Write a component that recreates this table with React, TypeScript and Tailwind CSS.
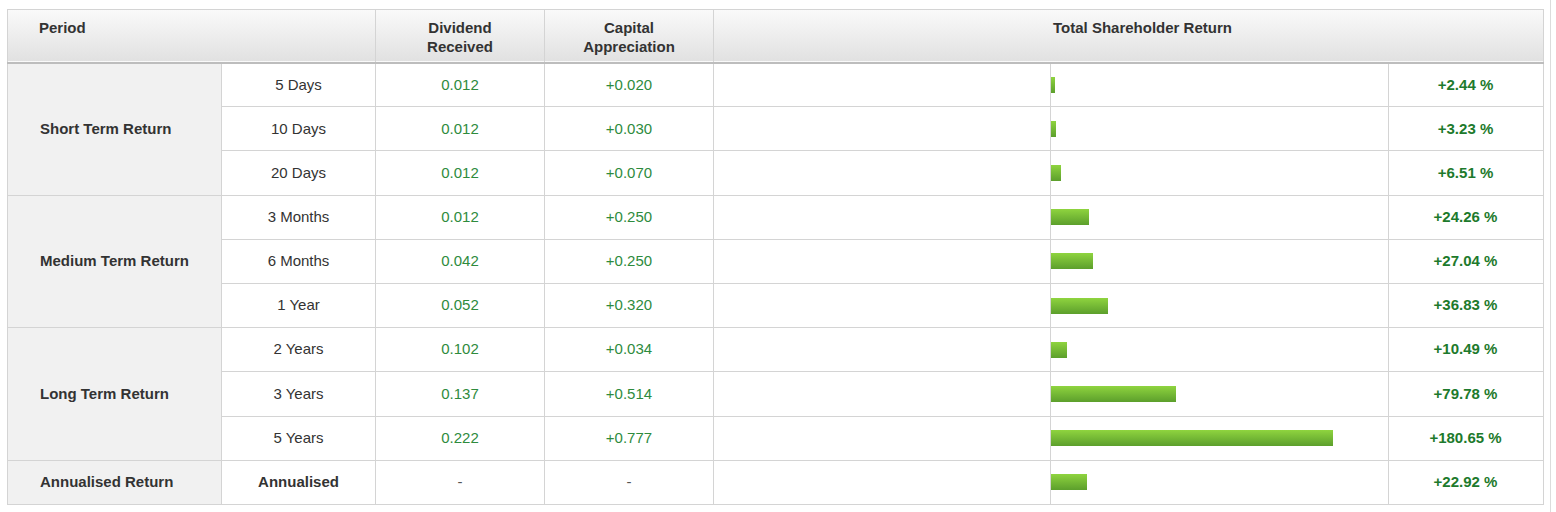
import React from "react";

type Row = {
  label: string;
  dividend: string;
  capital: string;
  tsr: number;
  bold?: boolean;
};

const groups: { name: string; rows: Row[] }[] = [
  {
    name: "Short Term Return",
    rows: [
      { label: "5 Days", dividend: "0.012", capital: "+0.020", tsr: 2.44 },
      { label: "10 Days", dividend: "0.012", capital: "+0.030", tsr: 3.23 },
      { label: "20 Days", dividend: "0.012", capital: "+0.070", tsr: 6.51 },
    ],
  },
  {
    name: "Medium Term Return",
    rows: [
      { label: "3 Months", dividend: "0.012", capital: "+0.250", tsr: 24.26 },
      { label: "6 Months", dividend: "0.042", capital: "+0.250", tsr: 27.04 },
      { label: "1 Year", dividend: "0.052", capital: "+0.320", tsr: 36.83 },
    ],
  },
  {
    name: "Long Term Return",
    rows: [
      { label: "2 Years", dividend: "0.102", capital: "+0.034", tsr: 10.49 },
      { label: "3 Years", dividend: "0.137", capital: "+0.514", tsr: 79.78 },
      { label: "5 Years", dividend: "0.222", capital: "+0.777", tsr: 180.65 },
    ],
  },
  {
    name: "Annualised Return",
    rows: [
      { label: "Annualised", dividend: "-", capital: "-", tsr: 22.92, bold: true },
    ],
  },
];

const cell = "border border-[#d4d4d4] text-center align-middle";

function Bar({ value }: { value: number }) {
  return (
    <div className="flex h-full">
      <div className="w-1/2 h-full border-r border-[#d4d4d4]" />
      <div className="w-1/2 h-full flex items-center">
        <div
          className="h-[16px] bg-gradient-to-b from-[#8fd43f] to-[#5c9f2c]"
          style={{ width: Math.round(value * 1.561) }}
        />
      </div>
    </div>
  );
}

function valueColor(v: string) {
  return v === "-" ? "text-[#555]" : "text-[#2e8b3d]";
}

export default function App() {
  return (
    <div className="relative w-[1556px] h-[512px] bg-white font-['Liberation_Sans',Arial,sans-serif] text-[15px] text-[#333]">
      <div className="absolute right-[5px] top-0 h-full w-px bg-[#dcdcdc]" />
      <div className="pl-[7px] pt-[9px]">
        <table className="border-collapse table-fixed w-[1536px] border border-[#d4d4d4]">
          <colgroup>
            <col className="w-[214px]" />
            <col className="w-[154px]" />
            <col className="w-[169px]" />
            <col className="w-[169px]" />
            <col className="w-[675px]" />
            <col className="w-[155px]" />
          </colgroup>
          <thead>
            <tr className="h-[53px] bg-gradient-to-b from-[#fafafa] to-[#e1e1e1] border-b-2 border-[#bdbdbd]">
              <th colSpan={2} className="border-r border-[#d4d4d4] text-left align-top pl-[31px] pt-[8px] font-bold leading-[19px]">
                Period
              </th>
              <th className="border-r border-[#d4d4d4] align-top pt-[8px] font-bold leading-[19px]">
                Dividend
                <br />
                Received
              </th>
              <th className="border-r border-[#d4d4d4] align-top pt-[8px] font-bold leading-[19px]">
                Capital
                <br />
                Appreciation
              </th>
              <th colSpan={2} className="align-top pt-[8px] font-bold leading-[19px] pl-[28px]">
                Total Shareholder Return
              </th>
            </tr>
          </thead>
          <tbody>
            {groups.map((g) =>
              g.rows.map((r, i) => (
                <tr key={g.name + r.label} className="h-[44.2px]">
                  {i === 0 && (
                    <td
                      rowSpan={g.rows.length}
                      className="border border-[#d4d4d4] bg-[#f1f1f1] text-left pl-[32px] font-bold align-middle"
                    >
                      {g.name}
                    </td>
                  )}
                  <td className={`${cell} ${r.bold ? "font-bold" : ""}`}>{r.label}</td>
                  <td className={`${cell} ${valueColor(r.dividend)}`}>{r.dividend}</td>
                  <td className={`${cell} ${valueColor(r.capital)}`}>{r.capital}</td>
                  <td className="border border-[#d4d4d4] p-0 h-[44px]">
                    <Bar value={r.tsr} />
                  </td>
                  <td className={`${cell} font-bold text-[#1d7a2c] pr-[1px]`}>
                    +{r.tsr.toFixed(2)} %
                  </td>
                </tr>
              ))
            )}
          </tbody>
        </table>
      </div>
    </div>
  );
}
